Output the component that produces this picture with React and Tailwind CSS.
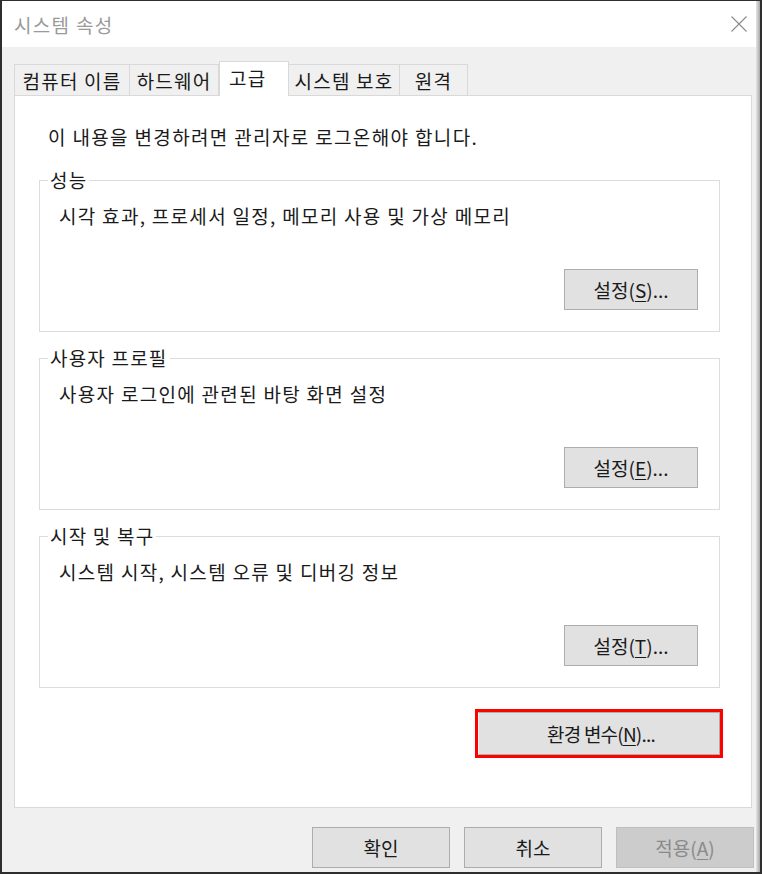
import React from "react";

function Btn({ children, className = "" }) {
  return (
    <div
      className={
        "flex items-center justify-center border border-[#adadad] bg-[#e1e1e1] text-[19px] leading-none text-[#1a1a1a] " +
        className
      }
    >
      {children}
    </div>
  );
}

function Group({ label, desc, btn, mn }) {
  return (
    <div className="relative flex h-[152px] w-[681px] flex-col border border-[#dcdcdc]">
      <div className="absolute left-[8px] top-[-13px] bg-white px-[2px] text-[19px] leading-[24px] tracking-[1.2px] text-[#1a1a1a]">
        {label}
      </div>
      <div className="pl-[19px] pt-[22px] text-[19px] leading-[26px] tracking-[1.3px] text-[#1a1a1a]">{desc}</div>
      <div className="mt-auto flex justify-end pb-[21px] pr-[21px]">
        <Btn className="h-[41px] w-[134px]">
          {btn}(<span className="underline underline-offset-[3px]">{mn}</span>)...
        </Btn>
      </div>
    </div>
  );
}

export default function App() {
  const tabs = [
    { t: "컴퓨터 이름", w: "w-[116px]" },
    { t: "하드웨어", w: "w-[89px]" },
    { t: "고급", w: "w-[70px]", sel: true },
    { t: "시스템 보호", w: "w-[111px]" },
    { t: "원격", w: "w-[68px]" },
  ];
  return (
    <div className="flex h-[874px] w-[762px] bg-[#2e2e2e] pb-[2px] pl-[2px] pt-[1px] font-[Noto_Sans_CJK_KR,sans-serif]">
      <div className="flex w-[754px] flex-col bg-[#f0f0f0]">
        {/* title bar */}
        <div className="flex h-[46px] items-center justify-between bg-white pl-[12px] pr-[9px]">
          <div className="text-[19px] leading-none tracking-[1.3px] text-[#9a9a9a]">시스템 속성</div>
          <svg width="16" height="16" viewBox="0 0 16 16" className="text-[#8a8a8a]">
            <path d="M0.5 0.5 L15.5 15.5 M15.5 0.5 L0.5 15.5" stroke="currentColor" strokeWidth="1.1" fill="none" />
          </svg>
        </div>
        {/* body */}
        <div className="flex flex-1 flex-col pt-[14px]">
          {/* tabs */}
          <div className="relative z-10 -mb-[1px] flex h-[35px] items-end pl-[12px]">
            {tabs.map((tb, i) => (
              <div
                key={i}
                className={
                  tb.w +
                  " flex items-center border-[#d9d9d9] text-[19px] leading-none tracking-[1.2px] text-[#1a1a1a] " +
                  (tb.sel
                    ? "h-[35px] border-l border-r border-t bg-white pb-[3px] pl-[9px]"
                    : "mb-[1px] h-[31px] justify-center border-t border-r bg-[#f0f0f0] " + (i === 0 ? "border-l" : ""))
                }
              >
                {tb.t}
              </div>
            ))}
          </div>
          {/* panel */}
          <div className="ml-[12px] flex h-[713px] w-[738px] flex-col border border-[#d9d9d9] bg-white pl-[24px]">
            <div className="pl-[9px] pt-[28px] text-[19px] leading-[26px] tracking-[1.35px] text-[#1a1a1a]">
              이 내용을 변경하려면 관리자로 로그온해야 합니다.
            </div>
            <div className="mt-[30px] flex flex-col gap-[26px]">
              <Group label="성능" desc="시각 효과, 프로세서 일정, 메모리 사용 및 가상 메모리" btn="설정" mn="S" />
              <Group label="사용자 프로필" desc="사용자 로그인에 관련된 바탕 화면 설정" btn="설정" mn="E" />
              <Group label="시작 및 복구" desc="시스템 시작, 시스템 오류 및 디버깅 정보" btn="설정" mn="T" />
            </div>
            <div className="mt-[21px] flex w-[682px] justify-end pr-0">
              <div className="mr-[-2px] h-[49px] w-[248px] border-[3px] border-[#ff0000] bg-white p-0">
                <div className="flex h-full w-full items-center justify-center border border-[#adadad] border-l-[#f4f4f4] bg-[#e1e1e1] pl-[4px] text-[19px] leading-none tracking-[-0.8px] text-[#1a1a1a]">
                  환경&nbsp;변수(<span className="underline underline-offset-[3px]">N</span>)...
                </div>
              </div>
            </div>
          </div>
          {/* bottom buttons */}
          <div className="flex justify-end gap-[14px] pr-[2px] pt-[19px]">
            <Btn className="h-[41px] w-[138px]">확인</Btn>
            <Btn className="h-[41px] w-[138px]">취소</Btn>
            <div className="flex h-[41px] w-[138px] items-center justify-center border border-[#bfbfbf] bg-[#cccccc] text-[19px] leading-none text-[#8a8a8a]">
              적용(<span className="underline underline-offset-[3px]">A</span>)
            </div>
          </div>
        </div>
      </div>
      <div className="w-[4px] bg-gradient-to-r from-[#e6e6e6] to-[#a8a8a8]" />
    </div>
  );
}
